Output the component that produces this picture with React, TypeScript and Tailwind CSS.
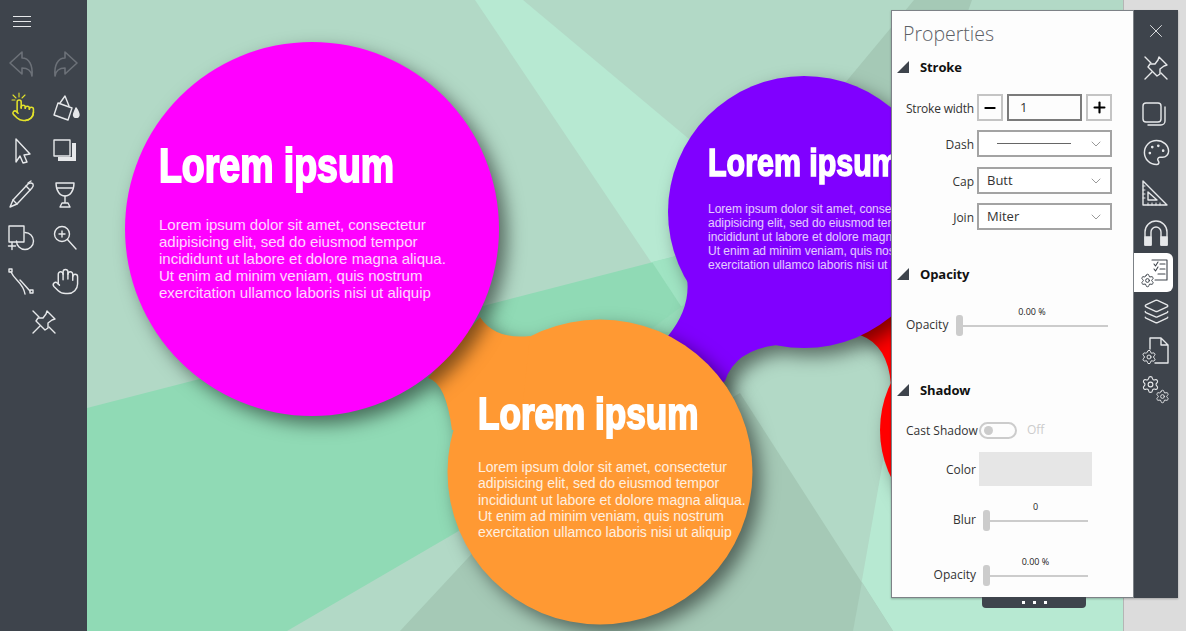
import type { ReactNode } from 'react';
import { ChevronDown, Settings, Hand, Layers, Minus, Palette, Plus, X } from 'lucide-react';

const loremLines = [
  'Lorem ipsum dolor sit amet, consectetur',
  'adipisicing elit, sed do eiusmod tempor',
  'incididunt ut labore et dolore magna aliqua.',
  'Ut enim ad minim veniam, quis nostrum',
  'exercitation ullamco laboris nisi ut aliquip',
];

function Glyph({ children, className = 'text-[#e6e8ea]' }: { children: ReactNode; className?: string }) {
  return (
    <svg viewBox="0 0 32 32" className={`h-8 w-8 ${className}`} fill="none" stroke="currentColor" strokeWidth="1.4" strokeLinejoin="round" strokeLinecap="round">
      {children}
    </svg>
  );
}

function PinIcon() {
  return (
    <Glyph>
      <path d="M19 5 L27 13 L24 14 L20 17 L20 22 L17 24 L8 15 L10 12 L15 12 L18 8 Z" />
      <path d="M12 20 L5 27 M5 5 L11 11 M21 21 L27 27" />
    </Glyph>
  );
}

function UndoIcon({ flip }: { flip?: boolean }) {
  return (
    <Glyph className={flip ? 'text-[#6c7178] -scale-x-100' : 'text-[#6c7178]'}>
      <path d="M4 15 L16 4 V10 C23 10 27 17 26 28 C25 22 22 20 16 20 V26 Z" strokeWidth="1.6" />
    </Glyph>
  );
}

function ToolGrid() {
  return (
    <div className="grid grid-cols-2 auto-rows-[43.5px] items-center justify-items-center">
      <UndoIcon />
      <UndoIcon flip />
      <Glyph className="text-[#e3e32b]">
        <g transform="translate(5 7) scale(1.02)" strokeWidth="1.5">
          <path d="M22 14a8 8 0 0 1-8 8" />
          <path d="M18 11v-1a2 2 0 0 0-2-2a2 2 0 0 0-2 2" />
          <path d="M14 10V9a2 2 0 0 0-2-2a2 2 0 0 0-2 2v1" />
          <path d="M10 9.5V4a2 2 0 0 0-2-2a2 2 0 0 0-2 2v10" />
          <path d="M18 11a2 2 0 1 1 4 0v3a8 8 0 0 1-8 8h-2c-2.8 0-4.5-.86-5.99-2.34l-3.6-3.6a2 2 0 0 1 2.83-2.82L7 15" />
        </g>
        <path d="M13 2 V6 M7 4 L10 7 M19 4 L16 7 M6 9 H9" strokeWidth="1.1" />
      </Glyph>
      <Glyph>
        <path d="M9 12 L23 17 L19 29 L5 24 Z" />
        <path d="M11 12 L16 5 L20 15" />
        <path d="M27 17 C29 20 30 22 30 24 A2.8 2.8 0 0 1 24.5 24 C24.5 22 26 20 27 17 Z" fill="currentColor" />
      </Glyph>
      <Glyph>
        <path d="M10 4 L24 19 L18 20 L21 27 L17 28 L14 21 L10 27 Z" />
      </Glyph>
      <Glyph>
        <path d="M23 8 H27 V26 H9 V22 H23 Z" fill="currentColor" stroke="none" />
        <rect x="5" y="5" width="16" height="16" />
      </Glyph>
      <Glyph>
        <path d="M4 29 L7 22 L22 6 Q25 4 27 6 Q28 8 26 10 L11 26 Z" />
        <path d="M7 22 L11 26 M20 8 L24 12 M22 5 L25 3" />
      </Glyph>
      <Glyph>
        <path d="M7 5 H25 C25 13 21 18 16 18 C11 18 7 13 7 5 Z" />
        <path d="M8 10 H24 M16 18 V25 M13 25 H19 L21 29 H11 Z" />
      </Glyph>
      <Glyph>
        <rect x="3" y="4" width="15" height="16" />
        <path d="M19 10.5 A8.5 8.5 0 1 1 10.5 19" />
        <path d="M2.5 24 H9.5 M6 20.5 V27.5" />
      </Glyph>
      <Glyph>
        <circle cx="13" cy="12" r="7.5" />
        <path d="M18.5 17.5 L27 27 M10 12 H16 M13 9 V15" />
      </Glyph>
      <Glyph>
        <rect x="3" y="4" width="3" height="3" />
        <rect x="24" y="25" width="3" height="3" />
        <path d="M5 7 C9 16 17 17 19 29 M14 15 C18 19 21 23 24 26" />
      </Glyph>
      <Hand size={29} strokeWidth={1.2} className="text-[#e6e8ea]" />
      <div className="col-span-2 -mt-[6px]">
        <PinIcon />
      </div>
    </div>
  );
}

function RailIcons() {
  return (
    <div className="flex flex-col items-center">
      <div className="flex h-[42px] w-full items-center justify-center">
        <X size={22} strokeWidth={1} className="text-[#e6e8ea]" />
      </div>
      <div className="flex h-[32px] w-full items-center justify-center">
        <PinIcon />
      </div>
      <div className="flex h-[45px] w-full items-end justify-center">
        <Glyph>
          <rect x="3" y="6" width="18" height="19" rx="3" />
          <path d="M25 10 V24 A4 4 0 0 1 21 28 H8" />
        </Glyph>
      </div>
      <div className="flex h-[46px] w-full items-center justify-center">
        <Palette size={29} strokeWidth={1.2} className="text-[#e6e8ea]" />
      </div>
      <div className="flex h-[38px] w-full items-center justify-center">
        <Glyph>
          <path d="M3 3 V27 H27 Z M8 14 V22 H17 Z" />
          <path d="M3 8 H5 M3 12 H5 M3 16 H5 M3 20 H5 M8 27 V25 M12 27 V25 M16 27 V25 M20 27 V25" strokeWidth="1" />
        </Glyph>
      </div>
      <div className="flex h-[40px] w-full items-center justify-center">
        <Glyph>
          <path d="M5 28 V15 A11 11 0 0 1 27 15 V28 H21 V15 A5 5 0 0 0 11 15 V28 Z" />
          <rect x="5" y="20" width="6" height="8" fill="currentColor" />
          <rect x="21" y="20" width="6" height="8" fill="currentColor" />
        </Glyph>
      </div>
      <div className="mr-[5px] flex h-[39px] w-[39px] items-center justify-center self-start rounded-r-md bg-white">
        <Glyph className="text-[#3e444c]">
          <path d="M14 3 H29 V23 H17" strokeWidth="1.1" />
          <path d="M16 7 L17.5 9 L20 5 M16 12 L17.5 14 L20 10 M22 7 H27 M22 12 H27 M20 17 H27" strokeWidth="1.1" />
          <Settings x={2} y={16} width={15} height={15} strokeWidth={1.6} />
        </Glyph>
      </div>
      <div className="flex h-[39px] w-full items-center justify-center">
        <Layers size={27} strokeWidth={1.2} className="text-[#e6e8ea]" />
      </div>
      <div className="flex h-[39px] w-full items-center justify-center">
        <Glyph>
          <path d="M10 14 V3 H21 L28 10 V28 H15 M21 3 V10 H28" />
          <Settings x={1} y={14} width={16} height={16} strokeWidth={1.5} />
        </Glyph>
      </div>
      <div className="flex h-[38px] w-full items-center justify-center">
        <Glyph>
          <Settings x={1} y={2} width={19} height={19} strokeWidth={1.4} />
          <Settings x={15} y={16} width={15} height={15} strokeWidth={1.5} />
        </Glyph>
      </div>
    </div>
  );
}

function Scene() {
  return (
    <svg viewBox="87 0 1036 631" className="absolute inset-0 h-full w-full">
      <rect x="87" y="0" width="1036" height="631" fill="#b2d9c6" />
      <polygon points="475,0 523,0 720,165 700,335" fill="#b7e9d2" />
      <polygon points="87,408 700,250 700,340 600,420 457,532 287,631 87,631" fill="#90dab5" />
      <polygon points="652,262 700,250 700,335" fill="#a0e4c3" />
      <polygon points="650,330 690,300 690,335" fill="#96dcb9" />
      <polygon points="885,450 1123,450 1123,631 853,631" fill="#b7e9d2" />
      <polygon points="740,393 893,631 400,631 480,545" fill="#a5c9b6" />
      <polygon points="862,582 893,631 853,631" fill="#add4c1" />
      <polygon points="845,83 914,0 972,0 900,200" fill="#a5c9b6" />
      <g className="drop-shadow-[8px_8px_9px_rgba(0,0,0,0.5)]" fill="#ff0000">
        <circle cx="988" cy="430" r="108" />
        <path d="M860 335 Q888 345 891 385 L950 385 L950 300 L860 300 Z" />
      </g>
      <g className="drop-shadow-[8px_8px_9px_rgba(0,0,0,0.5)]" fill="#8000ff">
        <circle cx="804" cy="212" r="136" />
        <path d="M687 278 Q691 308 668 336 L705 395 L725 381 Q735 350 777 345 L800 300 Z" />
      </g>
      <g className="drop-shadow-[8px_8px_9px_rgba(0,0,0,0.5)]" fill="#ff9933">
        <circle cx="600" cy="472" r="152.5" />
        <path d="M530 336 Q495 340 480 317 L428 378 Q446 383 452 430 L520 430 Z" />
      </g>
      <g className="drop-shadow-[8px_8px_9px_rgba(0,0,0,0.5)]" fill="#ff00ff">
        <circle cx="312" cy="229" r="187" />
      </g>
    </svg>
  );
}

function Label({ children, className = '' }: { children: ReactNode; className?: string }) {
  return <span className={`whitespace-nowrap text-[12px] text-[#333333] ${className}`}>{children}</span>;
}

function SectionHeader({ title, className = '' }: { title: string; className?: string }) {
  return (
    <div className={`flex h-[24px] items-center gap-[11px] pl-[5px] ${className}`}>
      <svg viewBox="0 0 12 12" className="h-[12px] w-[12px]">
        <polygon points="12,0 12,12 0,12" fill="#3e444c" />
      </svg>
      <span className="pt-[2px] text-[13px] font-bold tracking-[-0.1px] text-[#111111]">{title}</span>
    </div>
  );
}

function Select({ children }: { children: ReactNode }) {
  return (
    <div className="flex h-[27px] w-[135px] items-center justify-between border-2 border-[#a3a3a3] bg-white pl-[8px] pr-[6px] text-[13px] text-[#333333]">
      {children}
      <ChevronDown size={16} strokeWidth={1} className="text-[#666666]" />
    </div>
  );
}

function Slider({ value, className }: { value: string; className: string }) {
  return (
    <div className={`relative flex h-[21px] items-center ${className}`}>
      <div className="h-[21px] w-[7px] rounded-[3px] bg-[#cccccc]" />
      <div className="h-[2px] flex-1 bg-[#cccccc]" />
      <span className="absolute left-0 right-0 top-[-9px] text-center text-[9px] leading-[12px] text-[#222222]">{value}</span>
    </div>
  );
}

function PropertiesPanel() {
  return (
    <div className="h-[588px] w-[243px] border border-[#7d8287] bg-[#fdfdfd] font-['Open_Sans',sans-serif]">
      <div className="flex h-[44px] items-center pl-[11px] pt-[2px] text-[19.5px] font-light text-[#5c6066]">Properties</div>
      <SectionHeader title="Stroke" />
      <div className="mt-[15px] flex items-center">
        <Label className="w-[82px] pt-[2px] text-right tracking-[-0.2px]">Stroke width</Label>
        <div className="ml-[3px] flex items-center gap-[4px]">
          <div className="flex h-[27px] w-[26px] items-center justify-center border-2 border-[#c4c4c4]">
            <Minus size={16} strokeWidth={3} className="text-black" />
          </div>
          <div className="flex h-[27px] w-[75px] items-center border-2 border-[#7b7b7b] pl-[11px] text-[13px] text-[#333333]">1</div>
          <div className="flex h-[27px] w-[26px] items-center justify-center border-2 border-[#c4c4c4]">
            <Plus size={17} strokeWidth={3} className="text-black" />
          </div>
        </div>
      </div>
      <div className="mt-[9px] flex items-center">
        <Label className="w-[82px] pt-[2px] text-right">Dash</Label>
        <div className="ml-[3px]">
          <Select>
            <div className="ml-[10px] h-[1px] w-[74px] bg-[#666666]" />
          </Select>
        </div>
      </div>
      <div className="mt-[10px] flex items-center">
        <Label className="w-[82px] pt-[2px] text-right">Cap</Label>
        <div className="ml-[3px]">
          <Select>Butt</Select>
        </div>
      </div>
      <div className="mt-[9px] flex items-center">
        <Label className="w-[82px] pt-[2px] text-right">Join</Label>
        <div className="ml-[3px]">
          <Select>Miter</Select>
        </div>
      </div>

      <SectionHeader title="Opacity" className="mt-[32px]" />
      <div className="mt-[29px] flex items-center">
        <Label className="w-[64px] pb-[2px] pl-[14px]">Opacity</Label>
        <Slider value="0.00 %" className="w-[152px]" />
      </div>

      <SectionHeader title="Shadow" className="mt-[42px]" />
      <div className="mt-[19px] flex h-[18px] items-center">
        <Label className="w-[84px] pt-[2px] pl-[14px]">Cast Shadow</Label>
        <div className="ml-[3px] flex h-[17px] w-[38px] items-center rounded-full border-2 border-[#cccccc] pl-[3px]">
          <div className="h-[9px] w-[9px] rounded-full bg-[#cccccc]" />
        </div>
        <span className="ml-[10px] text-[12px] text-[#cccccc]">Off</span>
      </div>
      <div className="mt-[13px] flex items-center">
        <Label className="w-[84px] pt-[2px] text-right">Color</Label>
        <div className="ml-[3px] h-[34px] w-[113px] bg-[#e6e6e6]" />
      </div>
      <div className="mt-[24px] flex items-center">
        <Label className="w-[84px] pb-[2px] text-right">Blur</Label>
        <div className="ml-[7px]">
          <Slider value="0" className="w-[105px]" />
        </div>
      </div>
      <div className="mt-[34px] flex items-center">
        <Label className="w-[84px] pb-[2px] text-right">Opacity</Label>
        <div className="ml-[7px]">
          <Slider value="0.00 %" className="w-[105px]" />
        </div>
      </div>
    </div>
  );
}

export default function App() {
  return (
    <div className="relative flex h-[631px] w-[1186px] overflow-hidden bg-[#dcdcdc] font-['Liberation_Sans',sans-serif]">
      <aside className="flex h-full w-[87px] shrink-0 flex-col bg-[#3e444c]">
        <div className="flex h-[42px] w-[43.5px] items-center justify-center">
          <div className="flex h-[11px] w-[18px] flex-col justify-between">
            <div className="h-px bg-[#e6e8ea]" />
            <div className="h-px bg-[#e6e8ea]" />
            <div className="h-px bg-[#e6e8ea]" />
          </div>
        </div>
        <ToolGrid />
      </aside>

      <main className="relative h-full w-[1036px] shrink-0 overflow-hidden">
        <Scene />
        <div className="absolute left-[72px] top-[142px] text-white">
          <h2 className="origin-left scale-x-[0.78] whitespace-nowrap text-[48px] font-bold leading-[48px] [-webkit-text-stroke:2px_white]">Lorem ipsum</h2>
          <div className="mt-[26px] whitespace-nowrap text-[15px] leading-[17px] text-white/85">
            {loremLines.map((line) => (
              <div key={line}>{line}</div>
            ))}
          </div>
        </div>
        <div className="absolute left-[391px] top-[391px] text-white">
          <h2 className="origin-left scale-x-[0.78] whitespace-nowrap text-[45px] font-bold leading-[45px] [-webkit-text-stroke:2px_white]">Lorem ipsum</h2>
          <div className="mt-[23px] whitespace-nowrap text-[14px] leading-[16.25px] text-white/85">
            {loremLines.map((line) => (
              <div key={line}>{line}</div>
            ))}
          </div>
        </div>
        <div className="absolute left-[621px] top-[144px] text-white">
          <h2 className="origin-left scale-x-[0.8] whitespace-nowrap text-[38px] font-bold leading-[38px] [-webkit-text-stroke:1.6px_white]">Lorem ipsum</h2>
          <div className="mt-[20px] whitespace-nowrap text-[12px] leading-[14px] text-white/80">
            {loremLines.map((line) => (
              <div key={line}>{line}</div>
            ))}
          </div>
        </div>
      </main>

      <div className="h-full flex-1 border-l border-[#b5b5b5]" />

      <div className="absolute left-[891px] top-[10px] flex h-[588px] shadow-[0_1px_2px_rgba(0,0,0,0.25)]">
        <PropertiesPanel />
        <div className="h-[588px] w-[44px] bg-[#3e444c]">
          <RailIcons />
        </div>
      </div>

      <div className="absolute left-[982px] top-[597px] flex h-[11px] w-[104px] items-center justify-center gap-[8px] rounded-b-[4px] bg-[#3e444c]">
        <div className="h-[3px] w-[3px] bg-white" />
        <div className="h-[3px] w-[3px] bg-white" />
        <div className="h-[3px] w-[3px] bg-white" />
      </div>
    </div>
  );
}
